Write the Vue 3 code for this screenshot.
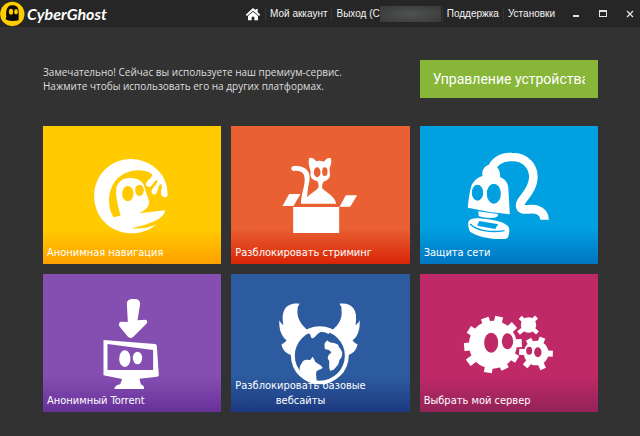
<script setup>
const gearTeeth = [
  [246, 140], [203, 144], [155, 178], [141, 231], [153, 278],
  [212, 308], [264, 297], [300, 268], [314, 219], [292, 165]
]
const smallTeeth = [
  [376, 203], [334, 208], [306, 245], [324, 289], [378, 297], [407, 251]
]
const tinyTeeth = [
  [309, 142], [358, 141], [361, 189], [304, 189]
]

const tiles = [
  { id: 'surf', lines: ['Анонимная навигация'] },
  { id: 'stream', lines: ['Разблокировать стриминг'] },
  { id: 'protect', lines: ['Защита сети'] },
  { id: 'torrent', lines: ['Анонимный Torrent'] },
  { id: 'unblock', lines: ['Разблокировать базовые', 'вебсайты'] },
  { id: 'server', lines: ['Выбрать мой сервер'] }
]
</script>

<template>
  <div class="window">
    <header class="topbar">
      <a class="brand" href="#">
        <svg class="brand-mark" viewBox="0 0 75 78" aria-hidden="true">
          <circle cx="37" cy="39" r="36.500" fill="#fc0" />
          <path d="M17 53C21 49 17 40 19 30C21 17 29 11 39 13C51 13 57 22 56 36L56 58Q47 60 38 60Q27 60 20 56Q16 56 17 53Z" fill="#0d0c08" />
          <ellipse cx="33" cy="32" rx="6.500" ry="9" fill="#fc0" />
          <ellipse cx="48" cy="32" rx="5.500" ry="8" fill="#fc0" />
        </svg>
        <span class="brand-name">CyberGhost</span>
      </a>
      <nav class="menu">
        <a class="home" href="#" aria-label="Home">
          <svg viewBox="0 0 48 42" aria-hidden="true">
            <path d="M24 3L2 23L6 27L24 11L42 27L46 23L38 16V6H32V10Z" />
            <path d="M9 27L24 14L39 27V40H28V29H20V40H9Z" />
          </svg>
        </a>
        <a class="item" href="#">Мой аккаунт</a>
        <a class="item account" href="#">Выход (C<span class="redacted"></span></a>
        <a class="item" href="#">Поддержка</a>
        <a class="item" href="#">Установки</a>
      </nav>
      <div class="controls">
        <button type="button" aria-label="Minimize">
          <svg viewBox="0 0 8 8"><path d="M1 6H7" stroke="#e4e4e4" stroke-width="2" /></svg>
        </button>
        <button type="button" aria-label="Maximize">
          <svg viewBox="0 0 8 8"><path d="M0 0H8V7H0ZM1 2V6H7V2Z" fill="#e4e4e4" fill-rule="evenodd" /></svg>
        </button>
        <button type="button" aria-label="Close">
          <svg viewBox="0 0 8 8"><path d="M1 1L7 7M7 1L1 7" stroke="#e4e4e4" stroke-width="1.300" /></svg>
        </button>
      </div>
    </header>

    <main class="content">
      <section class="intro">
        <p>Замечательно! Сейчас вы используете наш премиум-сервис.<br>Нажмите чтобы использовать его на других платформах.</p>
        <button class="manage" type="button"><span>Управление устройствами</span></button>
      </section>

      <section class="tiles">
        <button v-for="tile in tiles" :key="tile.id" type="button" class="tile" :class="tile.id">
          <svg v-if="tile.id === 'surf'" class="art" viewBox="9 18 534 414">
            <path d="M382 229C387 166 334 117 272 117C210 117 162 166 162 229C162 291 211 340 273 340C305 340 332 329 349 312C330 323 303 327 270 325C299 320 329 311 350 300C365 292 374 282 375 271C351 275 322 276 297 280C317 270 327 260 327 247C324 231 317 219 314 205C310 184 294 175 272 174C246 173 230 187 228 209C227 233 234 258 241 287L220 292C205 267 203 235 212 208C225 171 258 151 295 151C311 151 327 155 336 163C338 173 324 179 318 189C314 197 325 206 334 197C340 189 345 180 351 180C355 190 341 198 335 211C331 220 341 229 349 219C355 209 353 196 361 192C371 198 360 211 363 223C365 233 378 233 382 229Z" />
            <ellipse class="hole" cx="263" cy="221" rx="17" ry="23" />
            <ellipse class="hole" cx="298" cy="211" rx="13" ry="17" />
          </svg>

          <svg v-else-if="tile.id === 'stream'" class="art" viewBox="9 18 534 414">
            <path d="M195 261H333V339H195ZM183 222H217L196 258H163ZM353 226H387L366 260H334Z" />
            <path d="M218 251C219 217 236 187 227 164C222 154 210 151 197 153C187 152 187 139 197 138C216 137 234 142 241 157C249 175 241 191 239 211C237 221 238 225 236 232C249 219 267 211 271 201C273 194 269 188 267 183C256 182 245 173 247 162C249 152 245 148 243 138C241 127 241 118 244 114C252 112 258 118 265 124C272 122 280 122 287 125C293 117 301 112 308 115C311 124 309 135 305 142C302 150 307 159 305 169C302 179 293 183 286 185C283 192 279 200 284 207C296 218 321 230 324 251Z" />
            <ellipse class="hole" cx="267" cy="157" rx="10" ry="15" />
            <ellipse class="hole" cx="290" cy="155" rx="8" ry="13" />
          </svg>

          <svg v-else-if="tile.id === 'protect'" class="art" viewBox="9 18 534 414">
            <path d="M223 151C227 125 253 110 284 111C329 111 352 143 348 178C345 218 306 239 309 259C312 277 341 262 361 270C375 275 382 286 382 299" fill="none" stroke="#fff" stroke-width="26" stroke-linejoin="round" />
            <path d="M152 263C154 238 157 217 163 196C170 181 182 172 196 168C193 151 201 137 217 134C237 132 250 147 249 172C266 178 274 192 274 210C275 235 277 259 278 283Q213 277 152 263Z" />
            <path d="M183 274L242 282V289Q234 295 220 294Q201 294 185 289Z" />
            <path d="M153 308C156 294 175 294 197 296C225 298 261 304 273 319Q279 328 275 343Q275 355 263 357C224 359 183 351 159 335Q153 326 153 308Z" />
            <ellipse class="hole" cx="181" cy="218" rx="17" ry="24" />
            <ellipse class="hole" cx="230" cy="221" rx="21" ry="30" />
            <path class="hole" d="M186 303L243 313L234 327L180 317Z" />
            <path d="M159 312C178 331 217 339 262 332" fill="none" class="groove" />
          </svg>

          <svg v-else-if="tile.id === 'torrent'" class="art" viewBox="9 12 534 414">
            <path d="M260 101C260 90 271 86 281 87C292 86 300 91 300 101L292 151L315 149C323 150 322 157 318 162L281 199C275 206 268 205 262 199L240 172C235 165 235 157 243 155L263 156Z" />
            <path d="M190 210L345 222Q350 223 350 228L356 316Q356 320 350 320L298 326L302 343Q312 346 312 357H222Q225 345 240 343L246 327L190 316ZM202 222V300H339V240Z" fill-rule="evenodd" />
            <ellipse cx="254" cy="266" rx="17" ry="25" />
            <ellipse cx="292" cy="264" rx="14" ry="19" />
          </svg>

          <svg v-else-if="tile.id === 'unblock'" class="art" viewBox="9 12 534 414">
            <path d="M214 101C180 97 156 115 166 165C160 161 155 156 154 150C151 171 158 198 175 211C169 220 164 222 160 222C162 238 172 252 194 256L240 182C218 164 206 144 208 121Q208 108 214 101Z" />
            <path d="M334 101C370 97 391 118 382 165C388 161 393 156 394 150C397 171 390 201 373 211C379 220 384 222 388 222C386 238 376 252 356 256L310 182C334 164 343 144 340 121Q341 108 334 101Z" />
            <circle cx="275" cy="256" r="87" />
            <circle class="hole" cx="275" cy="257" r="75" />
            <path d="M240 181H311L301 192C290 185 278 183 271 190C263 196 259 207 250 204C246 199 249 191 240 190ZM289 224C289 217 295 215 298 211C303 218 310 219 318 219L330 224C332 234 339 237 342 247Q344 260 334 270L330 284C323 290 318 302 306 302C301 291 305 279 302 270C295 266 301 252 309 249C309 241 297 238 290 237Z" />
            <path d="M215 303C212 292 219 283 224 274C232 267 240 271 247 269L253 260Q257 264 260 272C262 280 274 280 283 292C283 299 271 298 266 304C261 310 266 320 265 335Q234 326 215 303Z" />
          </svg>

          <svg v-else class="art" viewBox="9 12 534 414">
            <g stroke="#fff">
              <path v-for="(p, i) in gearTeeth" :key="'a' + i" :d="`M227 224L${p[0]} ${p[1]}`" stroke-width="24" />
              <path v-for="(p, i) in smallTeeth" :key="'b' + i" :d="`M357 249L${p[0]} ${p[1]}`" stroke-width="18" />
              <path v-for="(p, i) in tinyTeeth" :key="'c' + i" :d="`M334 165L${p[0]} ${p[1]}`" stroke-width="13" />
            </g>
            <circle cx="227" cy="224" r="72" />
            <circle cx="357" cy="249" r="37" />
            <circle cx="334" cy="165" r="23" />
            <ellipse class="hole" cx="222" cy="218" rx="21" ry="30" />
            <ellipse class="hole" cx="271" cy="214" rx="17" ry="24" />
            <ellipse class="hole" cx="336" cy="242" rx="9" ry="12" />
            <ellipse class="hole" cx="362" cy="247" rx="11" ry="15" />
          </svg>

          <span class="label">
            <span class="label-text"><span v-for="line in tile.lines" :key="line" class="line">{{ line }}</span></span>
          </span>
        </button>
      </section>
    </main>
  </div>
</template>

<style>
html,
body {
  min-height: 100%;
  background: #323232;
}
</style>

<style scoped>
.window {
  background: #323232;
  font-family: "Open Sans", "Noto Sans", sans-serif;
  color: #e6e6e6;
}

button {
  border: 0;
  padding: 0;
  font: inherit;
  color: inherit;
}

a {
  color: inherit;
  text-decoration: none;
}

.topbar {
  display: flex;
  align-items: center;
  height: 27px;
  background: #262626;
}

.brand {
  display: flex;
  align-items: center;
  gap: 2px;
  margin-right: auto;
}

.brand-mark {
  width: 25px;
  height: 26px;
}

.brand-name {
  font-family: Lato, sans-serif;
  font-size: 16px;
  line-height: 24px;
  font-style: italic;
  font-weight: 700;
  color: #fff;
}

.menu {
  display: flex;
  align-items: center;
  font-family: "Liberation Sans", sans-serif;
  font-size: 10px;
  line-height: 14px;
  color: #f4f4f4;
}

.home {
  display: flex;
  padding-right: 4px;
}

.home svg {
  width: 16px;
  height: 14px;
  fill: #fff;
}

.item {
  display: flex;
  padding: 0 4px;
  border-left: 1px solid #353535;
  white-space: nowrap;
}

.account {
  padding-right: 1px;
}

.redacted {
  width: 61px;
  height: 16px;
  margin: -1px 0;
  background: radial-gradient(ellipse at center, #505151, #383939);
}

.controls {
  display: flex;
  gap: 19px;
  padding: 0 6px 0 13px;
}

.controls button {
  display: flex;
  background: none;
}

.controls svg {
  width: 8px;
  height: 8px;
}

.content {
  padding: 33px 42px 24px 43px;
}

.intro {
  display: grid;
  grid-template-columns: repeat(3, minmax(0, 1fr));
  column-gap: 10px;
  align-items: center;
  margin-bottom: 28px;
}

.intro p {
  grid-column: span 2;
  margin: 0;
  font-size: 10px;
  line-height: 14px;
  color: #dedede;
}

.manage {
  height: 38px;
  padding: 0 13px;
  background: #87b638;
  color: #fff;
  font-family: Roboto, sans-serif;
  font-size: 14px;
  line-height: 22px;
}

.manage span {
  display: block;
  overflow: hidden;
  white-space: nowrap;
  text-align: left;
}

.tiles {
  display: grid;
  grid-template-columns: repeat(3, minmax(0, 1fr));
  gap: 10px;
}

.tile {
  display: grid;
  min-height: 138px;
  background: linear-gradient(to top, var(--edge), var(--base) 36px);
}

.art,
.label {
  grid-area: 1 / 1;
}

.art {
  width: 100%;
  height: 138px;
  fill: #fff;
}

.art .hole {
  fill: var(--base);
}

.art .groove {
  stroke: var(--base);
  stroke-width: 4;
}

.label {
  display: flex;
  align-items: flex-end;
  padding: 0 4px 4px;
  font-family: "DejaVu Sans Condensed", "DejaVu Sans", sans-serif;
  font-size: 11px;
  line-height: 15px;
  color: #fff;
}

.label-text {
  text-align: center;
}

.line {
  display: block;
}

.surf { --base: #ffcb00; --edge: #ffa000; }
.stream { --base: #e96133; --edge: #d92406; }
.protect { --base: #00a0e1; --edge: #0076c1; }
.torrent { --base: #854eb1; --edge: #67319a; }
.unblock { --base: #2d5b9f; --edge: #1c3980; }
.server { --base: #bf2968; --edge: #932357; }
</style>
